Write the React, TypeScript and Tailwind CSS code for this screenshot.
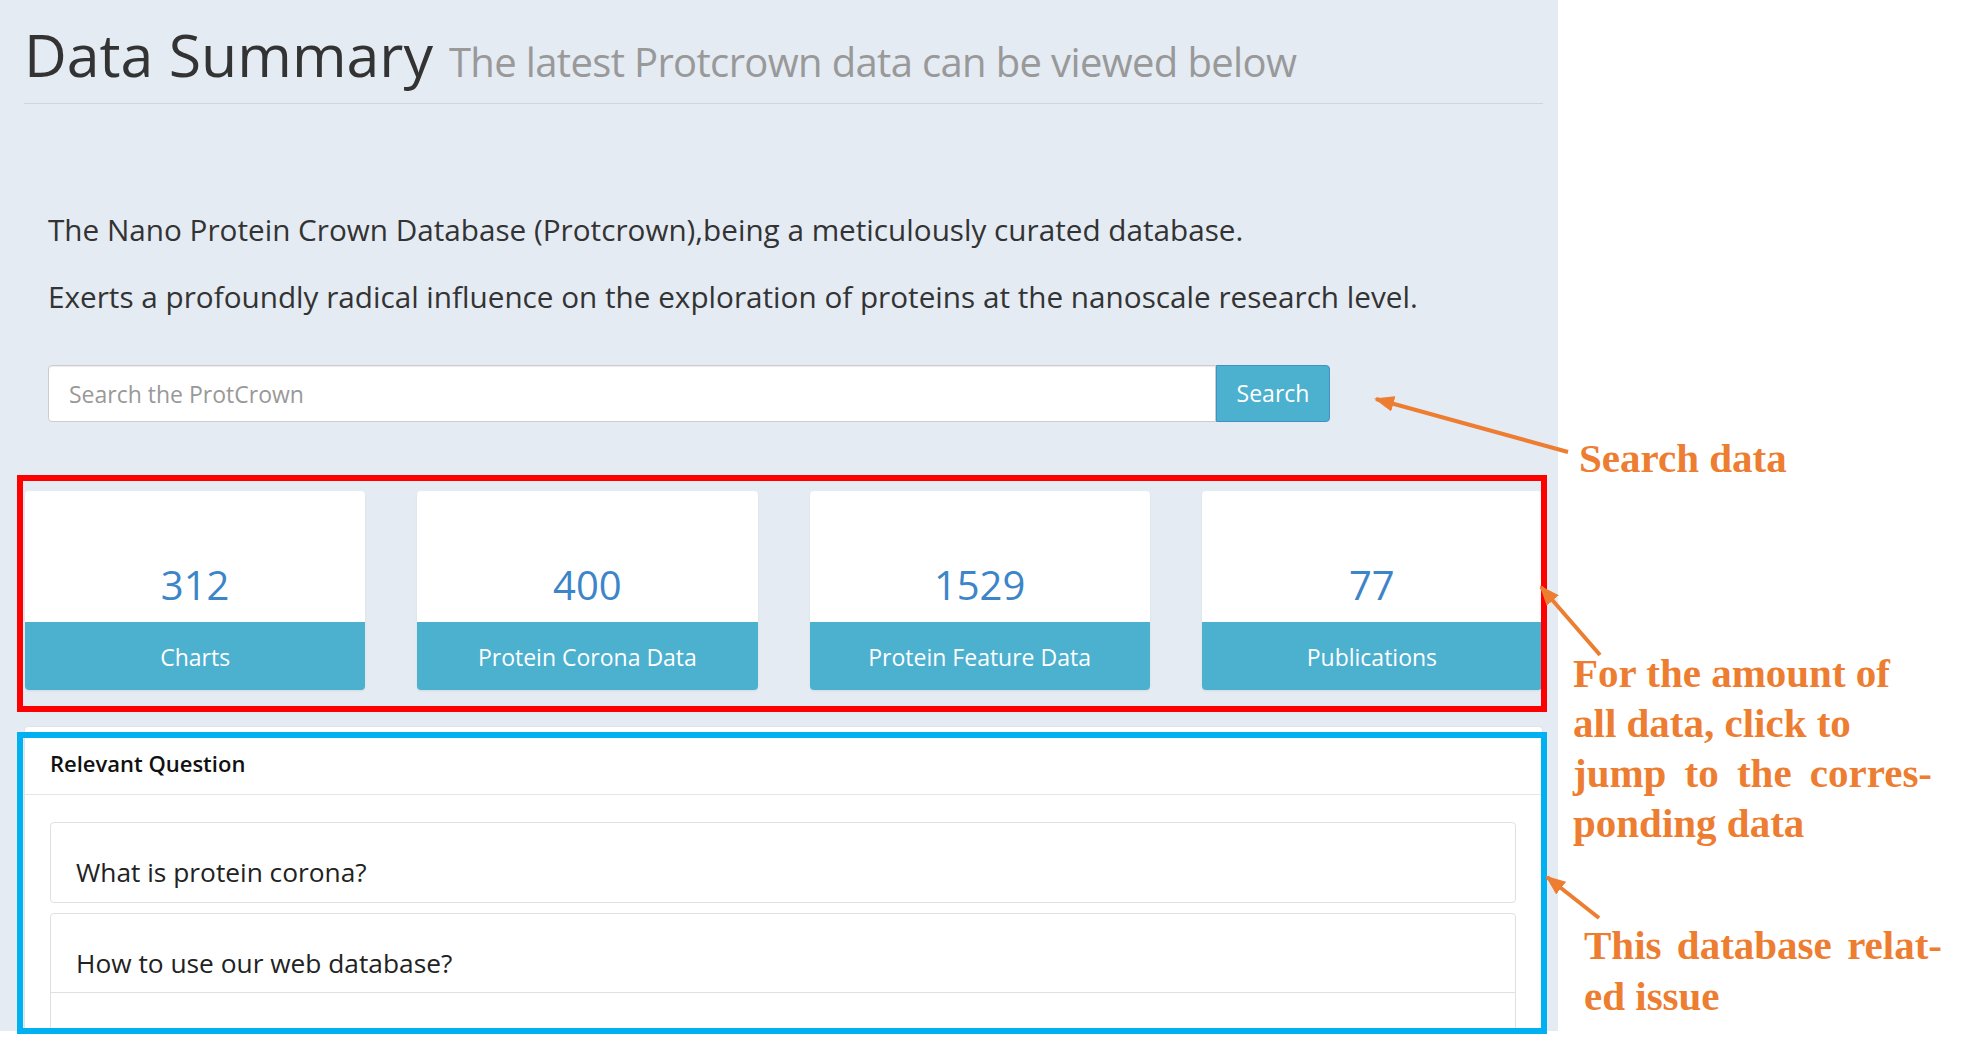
import React from "react";

const stats = [
  { value: "312", label: "Charts" },
  { value: "400", label: "Protein Corona Data" },
  { value: "1529", label: "Protein Feature Data" },
  { value: "77", label: "Publications" },
];

const questions = ["What is protein corona?", "How to use our web database?"];

function StatCard({ value, label }: { value: string; label: string }) {
  return (
    <div className="flex flex-col overflow-hidden rounded-[4px] bg-white shadow-[0_1px_2px_rgba(0,0,0,0.08)]">
      <div className="h-[131px] pt-[74px] text-center text-[40px] leading-none text-[#3c85c8]">
        {value}
      </div>
      <div className="flex h-[68px] items-center justify-center bg-[#4cb0cf] pt-[2px] text-[23px] text-white">
        {label}
      </div>
    </div>
  );
}

function Arrows() {
  return (
    <svg
      className="pointer-events-none absolute left-0 top-0"
      width="1970"
      height="1046"
      viewBox="0 0 1970 1046"
    >
      <defs>
        <marker
          id="head"
          markerWidth="5"
          markerHeight="4"
          refX="4.5"
          refY="2"
          orient="auto"
          markerUnits="strokeWidth"
        >
          <path d="M0,0 L5,2 L0,4 Z" fill="#ed7d31" />
        </marker>
      </defs>
      <g stroke="#ed7d31" strokeWidth="4" markerEnd="url(#head)">
        <line x1="1568" y1="452" x2="1376" y2="399" />
        <line x1="1600" y1="655" x2="1541" y2="587" />
        <line x1="1599" y1="918" x2="1547" y2="877" />
      </g>
    </svg>
  );
}

export default function App() {
  return (
    <div className="relative h-[1046px] w-[1970px] overflow-hidden bg-white font-['Open_Sans',sans-serif]">
      <div className="flex">
        <main className="h-[1031px] w-[1558px] shrink-0 overflow-hidden bg-[#e4ebf3] pl-[24px] pr-[15px] text-[#333]">
          <div className="flex items-baseline gap-[16px] border-b border-[#cfd5df] pb-[19px] pt-[25px]">
            <h1 className="text-[59px] leading-none text-[#333]">Data Summary</h1>
            <span className="text-[40px] leading-none tracking-[-0.65px] text-[#999]">
              The latest Protcrown data can be viewed below
            </span>
          </div>

          <div className="pl-[24px]">
            <p className="mt-[106px] text-[29.7px] leading-[39px]">
              The Nano Protein Crown Database (Protcrown),being a meticulously curated database.
            </p>
            <p className="mt-[28px] text-[29.7px] leading-[39px]">
              Exerts a profoundly radical influence on the exploration of proteins at the nanoscale research level.
            </p>

            <div className="mt-[49px] flex h-[57px] w-[1282px]">
              <input
                className="h-full flex-1 rounded-l-[4px] border border-[#ccc] bg-white px-[20px] text-[23px] shadow-[inset_0_1px_1px_rgba(0,0,0,0.075)] outline-none placeholder:text-[#999]"
                placeholder="Search the ProtCrown"
              />
              <button className="h-full w-[114px] rounded-r-[4px] border border-[#4290c4] bg-[#4cb0cf] text-[23px] text-white">
                Search
              </button>
            </div>
          </div>

          <div className="mt-[69px] grid w-[1518px] grid-cols-4 gap-[52px] pl-px">
            {stats.map((s) => (
              <StatCard key={s.label} value={s.value} label={s.label} />
            ))}
          </div>

          <div className="mt-[36px] rounded-[4px] border border-[#e3e3e3] bg-white">
            <div className="flex h-[68px] items-center border-b border-[#e5e5e5] pl-[25px] pt-[5px] text-[22px] font-semibold text-[#111]">
              Relevant Question
            </div>
            <div className="flex flex-col gap-[10px] px-[25px] pt-[27px]">
              {questions.map((q, i) => (
                <div
                  key={q}
                  className="w-[1466px] rounded-[4px] border border-[#e0e0e0] bg-white"
                >
                  <div
                    className={
                      i === 1
                        ? "border-b border-[#e0e0e0] pb-[11px] pl-[25px] pt-[31px] text-[26.3px] leading-[36px] text-[#222]"
                        : "pb-[12px] pl-[25px] pt-[31px] text-[26.3px] leading-[36px] text-[#222]"
                    }
                  >
                    {q}
                  </div>
                  {i === 1 && <div className="h-[80px]" />}
                </div>
              ))}
            </div>
          </div>
        </main>

        <aside className="flex flex-col pl-[21px] font-['Liberation_Serif',serif] font-bold text-[#ed7d31]">
          <div className="pt-[433px] text-[41px] leading-[50px]">Search data</div>
          <div className="ml-[-6px] mt-[165px] w-[359px] text-[41px] leading-[50px]">
            <div>For the amount of</div>
            <div>all data, click to</div>
            <div className="[text-align-last:justify]">jump to the corres-</div>
            <div>ponding data</div>
          </div>
          <div className="ml-[5px] mt-[72px] w-[358px] text-[41px] leading-[51px]">
            <div className="[text-align-last:justify]">This database relat-</div>
            <div>ed issue</div>
          </div>
        </aside>
      </div>

      <div className="pointer-events-none absolute left-[17px] top-[475px] h-[237px] w-[1530px] border-[6px] border-[#ff0000]" />
      <div className="pointer-events-none absolute left-[17px] top-[732px] h-[302px] w-[1530px] border-[6px] border-[#00b0f0]" />
      <Arrows />
    </div>
  );
}
